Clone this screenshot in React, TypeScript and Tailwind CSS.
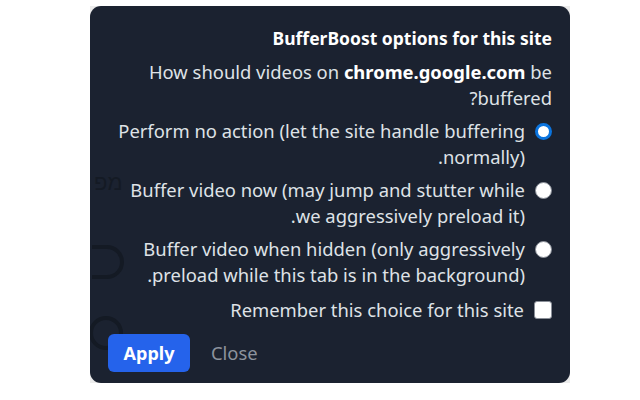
import React from "react";

const options = [
  {
    id: "none",
    label: "Perform no action (let the site handle buffering normally).",
    checked: true,
  },
  {
    id: "now",
    label: "Buffer video now (may jump and stutter while we aggressively preload it).",
    checked: false,
  },
  {
    id: "hidden",
    label: "Buffer video when hidden (only aggressively preload while this tab is in the background).",
    checked: false,
  },
];

function Radio({ checked }: { checked: boolean }) {
  if (checked) {
    return <span className="mt-[5px] h-[17px] w-[17px] shrink-0 rounded-full border-[3px] border-[#0b74de] bg-white" />;
  }
  return <span className="mt-[5px] h-[17px] w-[17px] shrink-0 rounded-full border border-[#8a8f98] bg-white" />;
}

export default function App() {
  return (
    <div className="relative h-[400px] w-[640px] bg-white" style={{ fontFamily: '"Noto Sans", "Open Sans", sans-serif' }}>
      <div className="absolute left-[90px] top-[6px] h-[377px] w-[480px] bg-[#ececec]">
        <div dir="rtl" className="relative h-full w-full overflow-hidden rounded-[11px] bg-[#1b2230] px-[18px] pt-[20px]">
          {/* page content showing through on the left edge */}
          <div className="absolute left-[4px] top-[166px] text-[22px] leading-none text-[#141a24]" style={{ fontFamily: '"Liberation Sans", "DejaVu Sans", sans-serif' }}>
            מפ
          </div>
          <svg className="absolute left-0 top-[233px]" width="40" height="116" viewBox="0 0 40 116">
            <path d="M2 8 H17 A15 15 0 0 1 17 38 H2" fill="none" stroke="#141a24" strokeWidth="4" />
            <circle cx="16" cy="94" r="15" fill="none" stroke="#141a24" strokeWidth="4" />
          </svg>

          <div className="relative">
            <h1 className="text-[17.5px] font-bold leading-[24px] text-white">BufferBoost options for this site</h1>
            <p className="mt-[9px] text-[18.4px] leading-[26px] text-[#dfe2e7]">
              How should videos on <b className="font-bold text-white">chrome.google.com</b> be buffered?
            </p>

            <div className="mt-[7px] flex flex-col gap-[7px]">
              {options.map((o) => (
                <label key={o.id} className="flex items-start gap-[10px]">
                  <Radio checked={o.checked} />
                  <span className="w-[415px] text-[18.4px] leading-[26px] text-[#dfe2e7]">{o.label}</span>
                </label>
              ))}
            </div>

            <label className="mt-[9px] flex items-start gap-[10px]">
              <span className="mt-[4px] h-[18px] w-[18px] shrink-0 rounded-[3px] border border-[#8a8f98] bg-white" />
              <span className="text-[18.4px] leading-[26px] text-[#dfe2e7]">Remember this choice for this site</span>
            </label>

            <div dir="ltr" className="mt-[11px] flex items-center gap-[21px]">
              <button className="h-[38px] w-[82px] rounded-[6px] bg-[#2563eb] text-[18px] font-bold text-white">Apply</button>
              <button className="text-[18.4px] text-[#8d939d]">Close</button>
            </div>
          </div>
        </div>
      </div>
    </div>
  );
}
